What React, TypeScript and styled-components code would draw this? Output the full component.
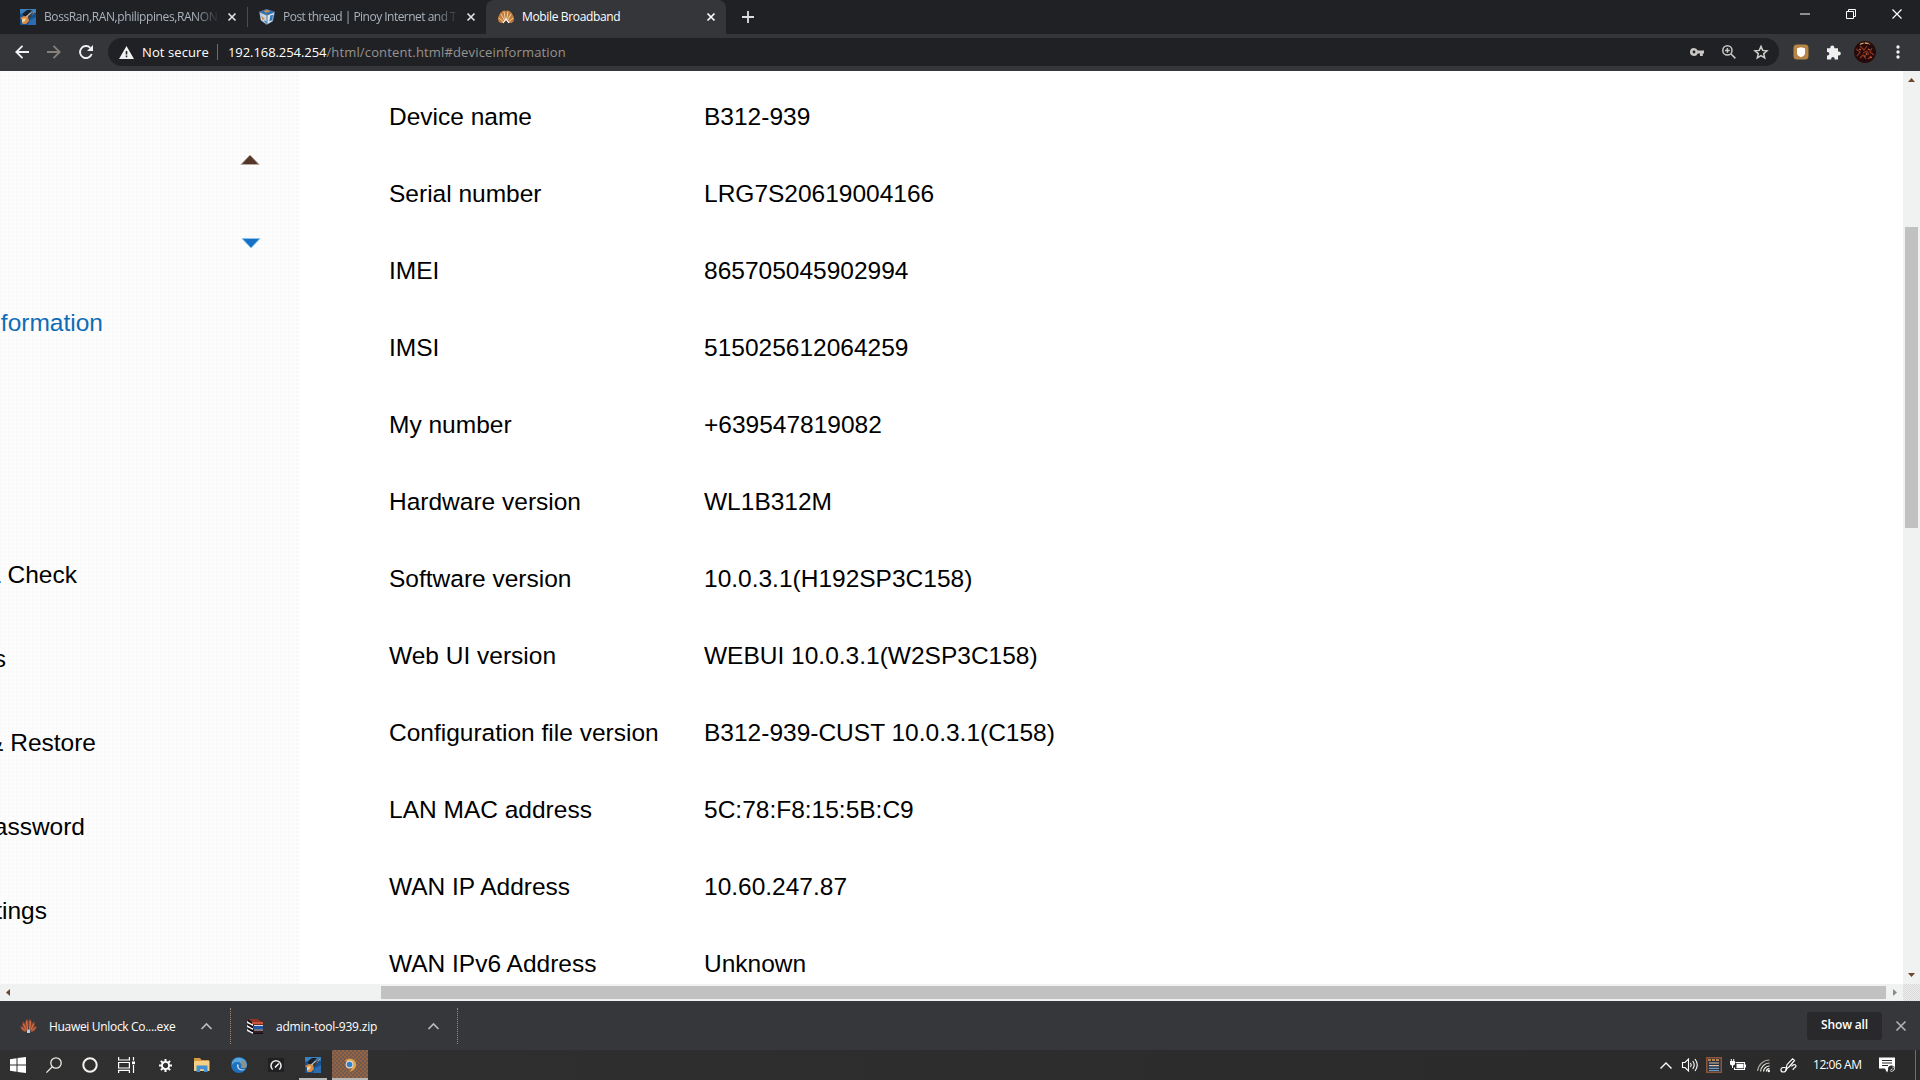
import React from "react";
import styled, { createGlobalStyle } from "styled-components";

const Global = createGlobalStyle`
  html, body { margin: 0; padding: 0; overflow: hidden; background: #fff; }
  * { box-sizing: border-box; }
`;

const UI = `"Open Sans", "Noto Sans", sans-serif`;

const Screen = styled.div`
  width: 1920px;
  height: 1080px;
  display: flex;
  flex-direction: column;
  overflow: hidden;
  background: #fff;
  font-family: ${UI};
  font-size: 12px;
`;

const Svg = styled.svg`
  display: block;
  flex: none;
  overflow: visible;
`;

const Label = styled.span<{ $w?: number; $ls?: number; $color?: string; $weight?: number; $size?: number }>`
  flex: none;
  white-space: pre;
  width: ${(p) => (p.$w ? `${p.$w}px` : "auto")};
  letter-spacing: ${(p) => p.$ls ?? 0}px;
  color: ${(p) => p.$color ?? "#fff"};
  font-weight: ${(p) => p.$weight ?? 400};
  font-size: ${(p) => p.$size ?? 12}px;
  line-height: 18px;
`;

const FadedLabel = styled(Label)`
  overflow: hidden;
  mask-image: linear-gradient(to right, #000 86%, transparent 100%);
`;

/* ---------- tab strip ---------- */

const TabStrip = styled.div`
  height: 34px;
  flex: none;
  display: flex;
  background: #202124;
  padding-left: 8px;
`;

const Tab = styled.div<{ $w: number; $pl?: number; $active?: boolean }>`
  width: ${(p) => p.$w}px;
  height: 34px;
  padding: 0 11px 0 ${(p) => p.$pl ?? 12}px;
  display: flex;
  align-items: center;
  gap: 8px;
  background: ${(p) => (p.$active ? "#35363a" : "transparent")};
  border-radius: 8px 8px 0 0;
`;

const TabDivider = styled.div`
  width: 1px;
  height: 20px;
  margin-top: 7px;
  background: #5c483c;
`;

const TabClose = styled.div`
  margin-left: auto;
`;

const NewTab = styled.div`
  width: 44px;
  height: 34px;
  display: grid;
  place-items: center;
`;

const WindowButtons = styled.div`
  margin-left: auto;
  display: flex;
`;

const WindowButton = styled.div`
  width: 46px;
  height: 28px;
  display: grid;
  place-items: center;
`;

/* ---------- toolbar ---------- */

const Toolbar = styled.div`
  height: 37px;
  flex: none;
  display: flex;
  align-items: center;
  padding: 0 6px 1px;
  background: #35363a;
`;

const Slot = styled.div<{ $w?: number }>`
  width: ${(p) => p.$w ?? 32}px;
  height: 28px;
  flex: none;
  display: grid;
  place-items: center;
`;

const Omnibox = styled.div`
  width: 1672px;
  height: 28px;
  margin-left: 6px;
  padding: 0 2px 0 11px;
  display: flex;
  align-items: center;
  background: #202124;
  border-radius: 14px;
`;

const Security = styled.div`
  width: 98px;
  display: flex;
  align-items: center;
  gap: 8px;
`;

const OmniDivider = styled.div`
  width: 1px;
  height: 16px;
  margin-right: 10px;
  background: #6b6d70;
`;

const OmniActions = styled.div`
  margin-left: auto;
  display: flex;
`;

const Extensions = styled.div`
  display: flex;
  margin-left: 6px;
`;

/* ---------- page ---------- */

const PageArea = styled.div`
  height: 913px;
  flex: none;
  display: flex;
`;

const Page = styled.main`
  flex: 1;
  display: flex;
  overflow: hidden;
  font-family: "Liberation Sans", Arial, sans-serif;
  font-size: 24.5px;
  color: #000;
`;

const SideMenu = styled.nav`
  width: 300px;
  flex: none;
  padding-top: 46px;
  background: radial-gradient(circle at 1px 1px, #f8f8f8 1px, transparent 1.2px) 0 0 / 4px 4px, #fdfdfd;
`;

const SideItem = styled.div<{ $end: number; $active?: boolean }>`
  height: 84px;
  width: ${(p) => p.$end}px;
  padding-bottom: 8px;
  display: flex;
  justify-content: flex-end;
  align-items: center;
  overflow: hidden;
  white-space: pre;
  color: ${(p) => (p.$active ? "#0f6cb6" : "#000")};
`;

const SideToggle = styled(SideItem)`
  padding-bottom: 1px;
`;

const Details = styled.section`
  padding: 7px 0 0 89px;
`;

const DetailRow = styled.div`
  display: grid;
  grid-template-columns: 315px 600px;
  height: 77px;
  align-items: center;
  white-space: pre;
`;

const VTrack = styled.div`
  width: 17px;
  background: #f0f1f1;
  display: flex;
  flex-direction: column;
  align-items: center;
  padding: 7px 0;
`;

const VThumb = styled.div`
  width: 13px;
  height: 301px;
  margin-top: 145px;
  margin-bottom: auto;
  background: #c1c1c1;
`;

const HTrack = styled.div`
  height: 17px;
  flex: none;
  display: flex;
  align-items: center;
  background: #f0f1f1;
  padding-left: 6px;
`;

const HThumb = styled.div`
  width: 1505px;
  height: 13px;
  margin: 0 7px 0 371px;
  background: #c1c1c1;
`;

const Corner = styled.div`
  margin-left: auto;
  width: 17px;
  height: 17px;
  background: repeating-conic-gradient(#d9d9d9 0 25%, #ececec 0 50%) 0 0 / 2px 2px;
`;

/* ---------- download shelf ---------- */

const Shelf = styled.div`
  height: 49px;
  flex: none;
  display: flex;
  align-items: center;
  background: #36373a;
`;

const Download = styled.div<{ $w: number; $pad: number }>`
  width: ${(p) => p.$w}px;
  height: 36px;
  margin-top: 1px;
  padding: 0 18px 0 ${(p) => p.$pad}px;
  display: flex;
  align-items: center;
  gap: 12px;
  border-right: 1px dotted #a58a72;
`;

const FileName = styled(Label)`
  padding-top: 1px;
`;

const Chevron = styled.div`
  margin-left: auto;
`;

const ShowAll = styled.div`
  margin-left: auto;
  width: 75px;
  height: 28px;
  padding-bottom: 1px;
  display: grid;
  place-items: center;
  background: #29292b;
  border-radius: 3px;
`;

/* ---------- taskbar ---------- */

const Taskbar = styled.div`
  height: 30px;
  flex: none;
  display: flex;
  background: linear-gradient(to right, #303031, #2a2a2b);
`;

const TaskGroup = styled.div<{ $ml?: number }>`
  display: flex;
  margin-left: ${(p) => p.$ml ?? 0}px;
`;

const TaskCell = styled.div<{ $w: number; $bg?: string }>`
  width: ${(p) => p.$w}px;
  height: 30px;
  display: flex;
  flex-direction: column;
  align-items: center;
  justify-content: center;
  background: ${(p) => p.$bg ?? "transparent"};
`;

const Running = styled(TaskCell)`
  justify-content: flex-end;
  gap: 5px;
`;

const Underline = styled.div<{ $w: number }>`
  width: ${(p) => p.$w}px;
  height: 2px;
  background: #b9b9b9;
`;

const Tray = styled.div`
  margin-left: auto;
  display: flex;
  align-items: center;
`;

const Clock = styled(Label)`
  margin-left: 11px;
`;

const DesktopEdge = styled.div`
  width: 1px;
  height: 30px;
  margin: 0 4px 0 20px;
  background: #6d6d6d;
`;

/* ---------- icons ---------- */

const Cross = ({ s = 8, c = "#dfe0e2", w = 1.7 }: { s?: number; c?: string; w?: number }) => (
  <Svg width={s} height={s} viewBox={`0 0 ${s} ${s}`} stroke={c} strokeWidth={w} fill="none">
    <path d={`M.5 .5L${s - 0.5} ${s - 0.5}M${s - 0.5} .5L.5 ${s - 0.5}`} />
  </Svg>
);

const RanIcon = () => (
  <Svg width="16" height="16" viewBox="0 0 16 16">
    <rect width="16" height="16" fill="#17528f" />
    <path d="M0 0h16v4L9 2 3 6 0 4z" fill="#3c7fbd" />
    <path d="M2 5l5-4 5 0-4 4 3 1-5 3z" fill="#182029" />
    <path d="M5 8l5-4 5-2-3 4-6 5z" fill="#c9c4bb" />
    <path d="M8 7l6-5-3 6-4 3z" fill="#3a3d42" />
    <path d="M0 9l4-2 4 1 1 4-3 3H2l2-3z" fill="#d98b43" />
    <path d="M2 10l4-1-1 3-3 2z" fill="#f3d29b" />
    <path d="M10 11l6-3v8H8z" fill="#2c6db0" />
  </Svg>
);

const BoxIcon = () => (
  <Svg width="16" height="16" viewBox="0 0 17 17">
    <path d="M0 3L8 0l9 3-2 10-7 4-6-5z" fill="#5a7fa6" />
    <path d="M1 3l7-2 8 2-7 3z" fill="#2a6bb5" />
    <path d="M5 2l4-1 3 2-5 1z" fill="#d69345" />
    <path d="M1 4l7 3v9l-6-4z" fill="#c8d6e3" />
    <path d="M9 7l7-3-2 9-5 3z" fill="#e0e4e6" />
    <path d="M2 7l4 3-2 2z" fill="#d18b3c" />
    <path d="M12 7l3-1-1 6-3 1z" fill="#2f78bd" />
    <path d="M5 12l3 1v3z" fill="#2f78bd" />
  </Svg>
);

/* Rounded flower used as the router's favicon. */
const BlossomIcon = () => (
  <Svg width="16" height="14" viewBox="0 0 16 14">
    <path d="M4 1.500Q6 0 8 1q2-1 4 .5 2.500 1 2.700 3.500Q16.500 7 16 9.500q0 2-2.500 3.500H10.500L8 10.500 5.500 13H2.500Q0 11.500 0 9.500-.5 7 1.300 5 1.500 2.500 4 1.500z" fill="#bf7c3d" />
    <path d="M6 1.500l1.300 8M10 1.500L8.700 9.500M3 4l3.500 6.500M13 4L9.500 10.500M1 8l4.500 4M15 8l-4.500 4" stroke="#efd0a4" strokeWidth="1" fill="none" />
    <path d="M5 13l3-4 3 4" stroke="#fff" strokeWidth="1.200" fill="none" />
  </Svg>
);

const HuaweiIcon = () => (
  <Svg width="17" height="16" viewBox="0 0 17 16">
    <g fill="#a8492f">
      <path d="M7.800 13C5 9 4.600 4 6.600 1.200 9 1 8.600 7 7.800 13z" />
      <path d="M9.200 13C12 9 12.400 4 10.400 1.200 8 1 8.400 7 9.200 13z" />
      <path d="M7 13.300C3 11 1.600 7 2.800 3.600 5 4.500 6.500 9 7 13.300z" />
      <path d="M10 13.300c4-2.300 5.400-6.300 4.200-9.700-2.200.9-3.700 5.400-4.200 9.700z" />
      <path d="M6.400 14C3 13.900.6 11.500.4 8 3 8.600 5.400 11 6.400 14z" />
      <path d="M10.600 14c3.400-.1 5.800-2.500 6-6-2.600.6-5 3-6 6z" />
    </g>
    <path d="M6.500 3l1 8M10.500 3l-1 8M3.400 6l3 6M13.600 6l-3 6M1.500 9.500l4 3.500M15.500 9.500l-4 3.500" stroke="#cf8050" strokeWidth=".9" fill="none" />
    <rect x="7" y="11.500" width="3" height="3.500" fill="#a9d2ec" />
  </Svg>
);

const BooksIcon = () => (
  <Svg width="17" height="17" viewBox="0 0 17 17">
    <path d="M1 1h11l4 3v12H5l-4-3z" fill="#150f14" />
    <path d="M1 1h10l5 3H5z" fill="#8f3426" />
    <path d="M5 4h11v2.500H5z" fill="#c6533a" />
    <path d="M0 3l5 3h1v2L0 5zM0 7l5 3h1v2L0 9zM0 11l5 3h1v2l-6-3z" fill="#f1f1f1" />
    <path d="M6 8h10v3H6z" fill="#1f57ab" />
    <path d="M6 12.500h10V15H6z" fill="#351b24" />
    <path d="M7 7h9v1H7zM7 11.500h9v1H7z" fill="#dcdcdc" />
  </Svg>
);

const UpChevron = ({ w = 9, c = "#b9babc", sw = 1.7 }: { w?: number; c?: string; sw?: number }) => (
  <Svg width={w} height={w / 2 + 1} viewBox={`0 0 ${w} ${w / 2 + 1}`} fill="none" stroke={c} strokeWidth={sw}>
    <path d={`M.5 ${w / 2 + 0.5}L${w / 2} 1L${w - 0.5} ${w / 2 + 0.5}`} />
  </Svg>
);

const Triangle = ({ d, w, h, c, edge }: { d: string; w: number; h: number; c: string; edge?: string }) => (
  <Svg width={w} height={h} viewBox={`0 0 ${w} ${h}`}>
    <path d={d} fill={c} stroke={edge ?? "none"} strokeWidth={edge ? 1 : 0} />
  </Svg>
);

const rows: [string, string][] = [
  ["Device name", "B312-939"],
  ["Serial number", "LRG7S20619004166"],
  ["IMEI", "865705045902994"],
  ["IMSI", "515025612064259"],
  ["My number", "+639547819082"],
  ["Hardware version", "WL1B312M"],
  ["Software version", "10.0.3.1(H192SP3C158)"],
  ["Web UI version", "WEBUI 10.0.3.1(W2SP3C158)"],
  ["Configuration file version", "B312-939-CUST 10.0.3.1(C158)"],
  ["LAN MAC address", "5C:78:F8:15:5B:C9"],
  ["WAN IP Address", "10.60.247.87"],
  ["WAN IPv6 Address", "Unknown"],
];

function Tabs() {
  return (
    <TabStrip>
      <Tab $w={239}>
        <RanIcon />
        <FadedLabel $w={176} $ls={-0.4} $color="#a9b2bd">BossRan,RAN,philippines,RANON</FadedLabel>
        <TabClose><Cross /></TabClose>
      </Tab>
      <TabDivider />
      <Tab $w={238} $pl={11}>
        <BoxIcon />
        <FadedLabel $w={176} $ls={-0.52} $color="#a9b2bd">Post thread | Pinoy Internet and T</FadedLabel>
        <TabClose><Cross /></TabClose>
      </Tab>
      <Tab $w={240} $active>
        <BlossomIcon />
        <Label $ls={-0.35}>Mobile Broadband</Label>
        <TabClose><Cross c="#fff" /></TabClose>
      </Tab>
      <NewTab>
        <Svg width="12" height="12" viewBox="0 0 12 12" stroke="#dddee0" strokeWidth="1.800"><path d="M6 0v12M0 6h12" /></Svg>
      </NewTab>
      <WindowButtons>
        <WindowButton><Svg width="10" height="2" viewBox="0 0 10 2"><path d="M0 .5h10v1H0z" fill="#fff" /></Svg></WindowButton>
        <WindowButton>
          <Svg width="10" height="10" viewBox="0 0 10 10" fill="none" stroke="#fff"><path d="M.5 2.500h7v7h-7zM2.500 2.500v-2h7v7h-2" /></Svg>
        </WindowButton>
        <WindowButton><Cross s={10} c="#fff" w={1.2} /></WindowButton>
      </WindowButtons>
    </TabStrip>
  );
}

function AddressBar() {
  return (
    <Toolbar>
      <Slot><Svg width="14" height="14" viewBox="0 0 14 14" fill="none" stroke="#f1f1f1" strokeWidth="1.800"><path d="M14 7H1.500M7.500 .8L1.300 7l6.200 6.200" /></Svg></Slot>
      <Slot><Svg width="14" height="14" viewBox="0 0 14 14" fill="none" stroke="#85807a" strokeWidth="1.800"><path d="M0 7h12.500M6.500 .8L12.700 7l-6.200 6.200" /></Svg></Slot>
      <Slot>
        <Svg width="14" height="14" viewBox="0 0 14 14">
          <path d="M12.700 9A6 6 0 1 1 11.300 2.800" fill="none" stroke="#f1f1f1" strokeWidth="1.900" />
          <path d="M14 0v6H8z" fill="#f1f1f1" />
        </Svg>
      </Slot>
      <Omnibox>
        <Security>
          <Svg width="15" height="13" viewBox="0 0 15 13"><path fillRule="evenodd" d="M7.500 0L15 13H0zM6.700 5v3.500h1.600V5zM6.700 9.600v1.600h1.600V9.600z" fill="#f1f1f1" /></Svg>
          <Label $size={13} $ls={0.1}>Not secure</Label>
        </Security>
        <OmniDivider />
        <Label $size={13} $ls={-0.07}>192.168.254.254</Label>
        <Label $size={13} $ls={0.15} $color="#969390">/html/content.html#deviceinformation</Label>
        <OmniActions>
          <Slot>
            <Svg width="14" height="8" viewBox="0 0 14 8"><path fillRule="evenodd" d="M4 0a4 4 0 0 1 3.700 2.500H14v3h-1.200V8H10V5.500H7.700A4 4 0 1 1 4 0zm0 2.600a1.400 1.400 0 1 0 0 2.800 1.400 1.400 0 0 0 0-2.800z" fill="#c9c8c5" /></Svg>
          </Slot>
          <Slot>
            <Svg width="14" height="14" viewBox="0 0 14 14" fill="none" stroke="#c9c8c5" strokeWidth="1.500"><circle cx="5.400" cy="5.400" r="4.600" /><path d="M8.800 8.800l4.600 4.600M5.400 3v4.800M3 5.400h4.800" /></Svg>
          </Slot>
          <Slot>
            <Svg width="15" height="14" viewBox="0 0 15 14" fill="none" stroke="#d0cecb" strokeWidth="1.500"><path d="M7 1.400l1.700 4 4.300.4-3.300 2.800 1 4.300L7 10.600l-3.700 2.300 1-4.300L1 5.800l4.300-.4z" /></Svg>
          </Slot>
        </OmniActions>
      </Omnibox>
      <Extensions>
        <Slot>
          <Svg width="16" height="16" viewBox="0 0 16 16"><rect x=".5" y=".5" width="15" height="15" rx="3.500" fill="#b98547" /><path d="M4 4.200l4-1 4 1v5c0 2-2 3-4 4-2-1-4-2-4-4z" fill="#fff" /></Svg>
        </Slot>
        <Slot>
          <Svg width="15" height="15" viewBox="0 0 15 15"><path d="M4.300 3.200V2.500a2 2 0 0 1 4 0v.7H12v3.400h.8a2 2 0 0 1 0 4H12v4H8.600v-.8a1.700 1.700 0 0 0-3.400 0v.8H1v-4h.6a1.700 1.700 0 0 0 0-3.500H1V3.200z" fill="#f0f0f0" /></Svg>
        </Slot>
        <Slot>
          <Svg width="22" height="22" viewBox="0 0 22 22">
            <circle cx="11" cy="11" r="11" fill="#250b0b" />
            <g fill="none" stroke="#8d3420" strokeWidth="1.200">
              <path d="M2 8l4 3-3 4M6 5l4 4 3-4M9 12l4-2 2 4M18 7l-2 4 4 3M6 17l3-3 3 4M14 18l3-3" />
              <path d="M5 8l2 1M14 8l2 1M10 15h2M12 12l1 2M18 16l-2 1" stroke="#d0623a" />
            </g>
            <path d="M6 3.500C8 1.500 14 1.500 16 3.500" stroke="#d19a62" strokeWidth="1.400" strokeDasharray="4 1" fill="none" />
          </Svg>
        </Slot>
        <Slot $w={33}><Svg width="4" height="14" viewBox="0 0 4 14" fill="#f1f1f1"><circle cx="2" cy="2" r="1.700" /><circle cx="2" cy="7" r="1.700" /><circle cx="2" cy="12" r="1.700" /></Svg></Slot>
      </Extensions>
    </Toolbar>
  );
}

function DevicePage() {
  return (
    <>
      <PageArea>
        <Page>
          <SideMenu>
            <SideToggle $end={260}><Triangle w={20} h={12} d="M1 11.500L10 2l9 9.500z" c="#563628" edge="#b5a99e" /></SideToggle>
            <SideToggle $end={261}><Triangle w={20} h={12} d="M1 1.500h18L10 11z" c="#1670c4" edge="#8cc4ee" /></SideToggle>
            <SideItem $end={103} $active>formation</SideItem>
            <SideItem $end={77} />
            <SideItem $end={77} />
            <SideItem $end={77}>{"& Check"}</SideItem>
            <SideItem $end={6}>s</SideItem>
            <SideItem $end={96}>{"& Restore"}</SideItem>
            <SideItem $end={85}>assword</SideItem>
            <SideItem $end={47}>tings</SideItem>
          </SideMenu>
          <Details>
            {rows.map(([name, value]) => (
              <DetailRow key={name}>
                <span>{name}</span>
                <span>{value}</span>
              </DetailRow>
            ))}
          </Details>
        </Page>
        <VTrack>
          <Triangle w={7} h={4} d="M0 4L3.500 0 7 4z" c="#6d452c" />
          <VThumb />
          <Triangle w={7} h={4} d="M0 0h7L3.500 4z" c="#6d452c" />
        </VTrack>
      </PageArea>
      <HTrack>
        <Triangle w={4} h={7} d="M4 0v7L0 3.500z" c="#6d452c" />
        <HThumb />
        <Triangle w={4} h={7} d="M0 0v7l4-3.500z" c="#8b8b8b" />
        <Corner />
      </HTrack>
    </>
  );
}

function DownloadShelf() {
  return (
    <Shelf>
      <Download $w={231} $pad={20}>
        <HuaweiIcon />
        <FileName $ls={-0.32}>Huawei Unlock Co....exe</FileName>
        <Chevron><UpChevron w={11} /></Chevron>
      </Download>
      <Download $w={227} $pad={16}>
        <BooksIcon />
        <FileName $ls={-0.2}>admin-tool-939.zip</FileName>
        <Chevron><UpChevron w={11} /></Chevron>
      </Download>
      <ShowAll><Label $weight={600} $ls={-0.15}>Show all</Label></ShowAll>
      <Slot $w={38}><Cross s={10} c="#b4b4b4" w={1.6} /></Slot>
    </Shelf>
  );
}

function WindowsTaskbar() {
  return (
    <Taskbar>
      <TaskGroup>
        <TaskCell $w={36}><Svg width="16" height="16" viewBox="0 0 16 16" fill="#fff"><path d="M0 2.200L6.500 1.300v6.200H0zM7.500 1.100L16 0v7.500H7.500zM0 8.500h6.500v6.200L0 13.800zM7.500 8.500H16V16l-8.500-1.100z" /></Svg></TaskCell>
        <TaskCell $w={36}><Svg width="16" height="16" viewBox="0 0 16 16" fill="none" stroke="#f0ece8" strokeWidth="1.300"><circle cx="10" cy="6" r="5.200" /><path d="M6.300 9.700L.4 15.600" /></Svg></TaskCell>
        <TaskCell $w={36}><Svg width="16" height="16" viewBox="0 0 16 16"><circle cx="8" cy="8" r="6.700" fill="none" stroke="#f5f2ee" strokeWidth="2" /></Svg></TaskCell>
        <TaskCell $w={36}>
          <Svg width="17" height="16" viewBox="0 0 17 16" fill="none" stroke="#fff" strokeWidth="1.200"><path d="M.6 0v3h10.800V0M.6 5.500h10.800v5.500H.6zM.6 16v-2.700h10.800V16M15.500 0v3.500M15.500 8v8" /><path d="M14 4.500h3v2.700h-3z" fill="#fff" stroke="none" /></Svg>
        </TaskCell>
      </TaskGroup>
      <TaskGroup $ml={3}>
        <TaskCell $w={36}>
          <Svg width="13" height="13" viewBox="0 0 13 13" fill="none" stroke="#fff"><circle cx="6.500" cy="6.500" r="3.600" strokeWidth="1.900" /><path strokeWidth="2" d="M6.500 0v2.500M6.500 10.500V13M0 6.500h2.500M10.500 6.500H13M1.900 1.900l1.700 1.700M9.400 9.400l1.700 1.700M11.100 1.900L9.400 3.600M3.600 9.400l-1.700 1.700" /></Svg>
        </TaskCell>
        <TaskCell $w={37}>
          <Svg width="16" height="14" viewBox="0 0 16 14"><path d="M0 0h6l1.500 2H15v11H0z" fill="#d89a45" /><path d="M1 3h14.500v10H0V4z" fill="#f6cf86" /><path d="M2.500 7.500h11V14H10v-2.800H6V14H2.500z" fill="#3f8fd2" /></Svg>
        </TaskCell>
        <TaskCell $w={37}>
          <Svg width="16" height="16" viewBox="0 0 16 16"><circle cx="8" cy="8" r="8" fill="#1f70bd" /><path d="M1 5a8 8 0 0 1 15 3c0 3-4 3.500-6 2.500 1-1 1-5-3-5.500C4 4.700 2 6 1 8z" fill="#57a7da" /><path d="M12 3c3 2 4 5 3.500 7-1.500 1.500-4 1.300-5.500.5 2-2 1-4-1-5z" fill="#8d918a" /><path d="M6.500 7c-1.500 3 1 6.500 5 6.500l3-1.200-3 .2C8 12.500 6.800 10 7.800 8z" fill="#d4e6ee" /></Svg>
        </TaskCell>
        <TaskCell $w={37}>
          <Svg width="16" height="14" viewBox="0 0 16 14"><rect width="16" height="14" fill="#202022" /><path d="M4.700 11.500a5 5 0 1 1 6.600 0" fill="none" stroke="#e9e9e9" strokeWidth="1.600" /><path d="M7 9.500l3.800-4" stroke="#fff" strokeWidth="1.500" /></Svg>
        </TaskCell>
        <Running $w={38}><RanIcon /><Underline $w={28} /></Running>
        <Running $w={36} $bg="repeating-conic-gradient(#946344 0 25%, #725b4e 0 50%) 0 0 / 4px 4px">
          <Svg width="16" height="16" viewBox="0 0 16 16"><path d="M3 3.500C6 .5 13 1 14 6c1 5-3 9-7 8.500 2-1 3-3 3-5L5 4z" fill="#e1a347" /><circle cx="7.500" cy="7.500" r="3.900" fill="#e6d9cc" /><circle cx="7.500" cy="7.500" r="2.800" fill="#2f81c9" /></Svg>
          <Underline $w={36} />
        </Running>
      </TaskGroup>
      <Tray>
        <TaskCell $w={24}><UpChevron w={12} c="#fff" sw={1.4} /></TaskCell>
        <TaskCell $w={24}>
          <Svg width="16" height="14" viewBox="0 0 16 14" fill="none" stroke="#fff" strokeWidth="1.100"><path d="M.5 4.500h2.500L6.500 1v12L3 9.500H.5zM8.500 5q1.500 2 0 4M10.700 3q3 4 0 8M13 1q4.500 6 0 12" /></Svg>
        </TaskCell>
        <TaskCell $w={24}>
          <Svg width="16" height="16" viewBox="0 0 16 16"><rect width="16" height="16" fill="#8d5638" /><rect x="1.500" y="1.500" width="13" height="13" fill="#293246" /><path d="M2 3h12" stroke="#e0a052" strokeWidth="1.500" strokeDasharray="3 1" /><path d="M3 6h10M3 8.700h10" stroke="#d6c39b" strokeWidth="1.200" /><path d="M3 11.300h10M3 13.500h10" stroke="#6e9ac0" strokeWidth="1.200" /></Svg>
        </TaskCell>
        <TaskCell $w={24}>
          <Svg width="16" height="12" viewBox="0 0 16 12"><path d="M5.500 3.500h9v7h-10V8.500" fill="none" stroke="#fff" strokeWidth="1.100" /><path d="M6.500 4.800h7v4.400h-7zM14.500 5.500H16v3h-1.500zM0 2h5v2.500A2 2 0 0 1 3 6.500V9H2V6.500a2 2 0 0 1-2-2zM.8 0h1v2h-1zM3.200 0h1v2h-1z" fill="#fff" /></Svg>
        </TaskCell>
        <TaskCell $w={26}>
          <Svg width="13" height="13" viewBox="0 0 13 13" fill="none" strokeWidth="1.200"><path d="M.6 12A12 12 0 0 1 12.500 1" stroke="#a79e95" /><path d="M3.600 12.500A9 9 0 0 1 12.500 4" stroke="#ddd8d2" /><path d="M6.500 12.500a6 6 0 0 1 6-5.500M9.300 12.500a3.300 3.300 0 0 1 3.200-2.800" stroke="#fff" /><circle cx="11.800" cy="12" r="1.200" fill="#fff" /></Svg>
        </TaskCell>
        <TaskCell $w={26}>
          <Svg width="16" height="15" viewBox="0 0 16 15" fill="none" stroke="#fff" strokeWidth="1.200"><path d="M4.500 9.500H2.200a2.200 2.200 0 1 0 0 4.500c3 0 3.300-2.300 4-4M5 11l1-4.300L11.500.8l2 1.700L8 9zM10.500 8.500c1-2.500 4.500-2.500 4.500-.5s-3 1.500-3 4" /></Svg>
        </TaskCell>
        <Clock $w={66} $ls={-0.45}>12:06 AM</Clock>
        <Svg width="16" height="16" viewBox="0 0 16 16"><path d="M0 .5h16v11h-6L8 15.500 6 11.500H0z" fill="#fff" /><path d="M3 3.500h10M3 6h10M3 8.500h6" stroke="#29292a" strokeWidth="1.200" /><circle cx="12.500" cy="12" r="3.500" fill="#29292a" /><path d="M10.500 13.500a2.800 2.800 0 0 0 4.300-3.200M15 9.500a3 3 0 1 1-4.500 4c2.500.5 3.500-1.500 3-4z" fill="#ddd" /></Svg>
        <DesktopEdge />
      </Tray>
    </Taskbar>
  );
}

export default function App() {
  return (
    <Screen>
      <Global />
      <Tabs />
      <AddressBar />
      <DevicePage />
      <DownloadShelf />
      <WindowsTaskbar />
    </Screen>
  );
}
